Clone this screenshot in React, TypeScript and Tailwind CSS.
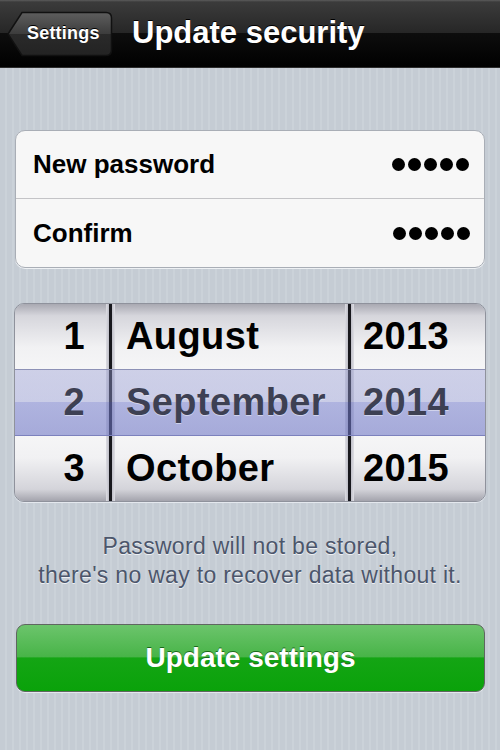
import React from 'react';

const Dots: React.FC = () => (
  <div className="flex gap-[3px]">
    {[0, 1, 2, 3, 4].map((i) => (
      <span key={i} className="w-[13px] h-[13px] rounded-full bg-black" />
    ))}
  </div>
);

const Divider: React.FC = () => (
  <div className="w-[9px] bg-[linear-gradient(to_right,#dcdce2_0,#bfbfc8_33%,#18181d_33%,#18181d_66%,#bfbfc8_66%,#dedee4_100%)]" />
);

const column =
  'flex flex-col bg-[linear-gradient(to_bottom,#a9a9b2_0,#d6d6dc_6%,#f1f1f3_22%,#fcfcfc_50%,#f1f1f3_78%,#d4d4da_94%,#a4a4ad_100%)]';

// middle row sits above the selection bar
const cell = (i: number) =>
  i === 1
    ? 'relative z-10 h-[67px] text-[#3d4053] [text-shadow:0_1px_0_rgba(255,255,255,0.45)]'
    : 'h-[65px] text-black';

const App: React.FC = () => {
  const days = ['1', '2', '3'];
  const months = ['August', 'September', 'October'];
  const years = ['2013', '2014', '2015'];

  return (
    <div className="w-[500px] h-[750px] overflow-hidden bg-[repeating-linear-gradient(to_right,#c5ccd4_0,#c5ccd4_5px,#cbd2d9_5px,#cbd2d9_7px)] font-['Liberation_Sans',Arial,sans-serif]">
      {/* nav bar */}
      <div className="h-[68px] flex items-center px-[7px] gap-[19px] border-b border-[#2c2c2c] bg-[linear-gradient(to_bottom,#5c5c5c_0,#3b3b3b_3%,#262626_50%,#0d0d0d_50%,#000_100%)]">
        <div className="relative w-[106px] h-[46px] flex items-center pl-[20px] pr-[12px]">
          <svg className="absolute inset-0" width="106" height="46" viewBox="0 0 106 46">
            <defs>
              <linearGradient id="bb" x1="0" y1="0" x2="0" y2="1">
                <stop offset="0" stopColor="#5e5e5e" />
                <stop offset="0.5" stopColor="#3c3c3c" />
                <stop offset="0.5" stopColor="#2a2a2a" />
                <stop offset="1" stopColor="#232323" />
              </linearGradient>
            </defs>
            <path
              d="M1 23 L15 1.5 H99 Q104.5 1.5 104.5 7 V39 Q104.5 44.5 99 44.5 H15 Z"
              fill="url(#bb)"
              stroke="#111"
              strokeWidth="1.5"
            />
          </svg>
          <span className="relative text-white font-bold text-[18px] tracking-[0.2px] [text-shadow:0_-1px_0_#000]">Settings</span>
        </div>
        <h1 className="text-white font-bold text-[31px] leading-none -mt-[3px] [text-shadow:0_-1px_0_#000]">
          Update security
        </h1>
      </div>

      <div className="px-[15px]">
        {/* password group */}
        <div className="mt-[62px] rounded-[10px] border border-[#a9aeb6] bg-[#f7f7f7] shadow-[0_1px_0_#eef1f4]">
          <div className="h-[68px] flex items-center justify-between pl-[17px] pr-[15px] border-b border-[#c4c4c7]">
            <span className="text-[26px] font-bold text-black">New password</span>
            <Dots />
          </div>
          <div className="h-[68px] flex items-center justify-between pl-[17px] pr-[14px]">
            <span className="text-[26px] font-bold text-black">Confirm</span>
            <Dots />
          </div>
        </div>

        {/* date picker */}
        <div className="relative mt-[35px] -mx-px flex rounded-[10px] overflow-hidden border border-[#8f929c] shadow-[0_1px_0_#e4e8ee] text-[38px] tracking-[0.4px] font-bold">
          <div className={`${column} w-[91px]`}>
            {days.map((d, i) => (
              <div key={d} className={`${cell(i)} flex items-center justify-end pr-[21px]`}>
                {d}
              </div>
            ))}
          </div>
          <Divider />
          <div className={`${column} w-[230px]`}>
            {months.map((m, i) => (
              <div key={m} className={`${cell(i)} flex items-center pl-[11px]`}>
                {m}
              </div>
            ))}
          </div>
          <Divider />
          <div className={`${column} flex-1`}>
            {years.map((y, i) => (
              <div key={y} className={`${cell(i)} flex items-center pl-[9px]`}>
                {y}
              </div>
            ))}
          </div>
          {/* selection bar */}
          <div className="absolute left-0 right-0 top-[65px] h-[67px] border-t border-b border-t-[#8d91b6] border-b-[#7c81bd] bg-[linear-gradient(to_bottom,rgba(150,155,210,0.42)_0,rgba(140,146,205,0.45)_50%,rgba(112,120,200,0.55)_50%,rgba(108,116,196,0.58)_100%)]" />
        </div>

        <p className="mt-[30px] text-center text-[23px] tracking-[0.3px] leading-[29px] text-[#4c566b] [text-shadow:0_1px_0_#eef1f4]">
          Password will not be stored,
          <br />
          there's no way to recover data without it.
        </p>

        <button className="mt-[34px] w-[469px] h-[68px] ml-px rounded-[9px] border border-[#5f6660] bg-[linear-gradient(to_bottom,#6cc46c_0,#48b448_48%,#14a514_50%,#0aa20a_100%)] text-white font-bold text-[28px] [text-shadow:0_-1px_0_#1a6a1a] shadow-[0_1px_0_#e4e8ee]">
          Update settings
        </button>
      </div>
    </div>
  );
};

export default App;
